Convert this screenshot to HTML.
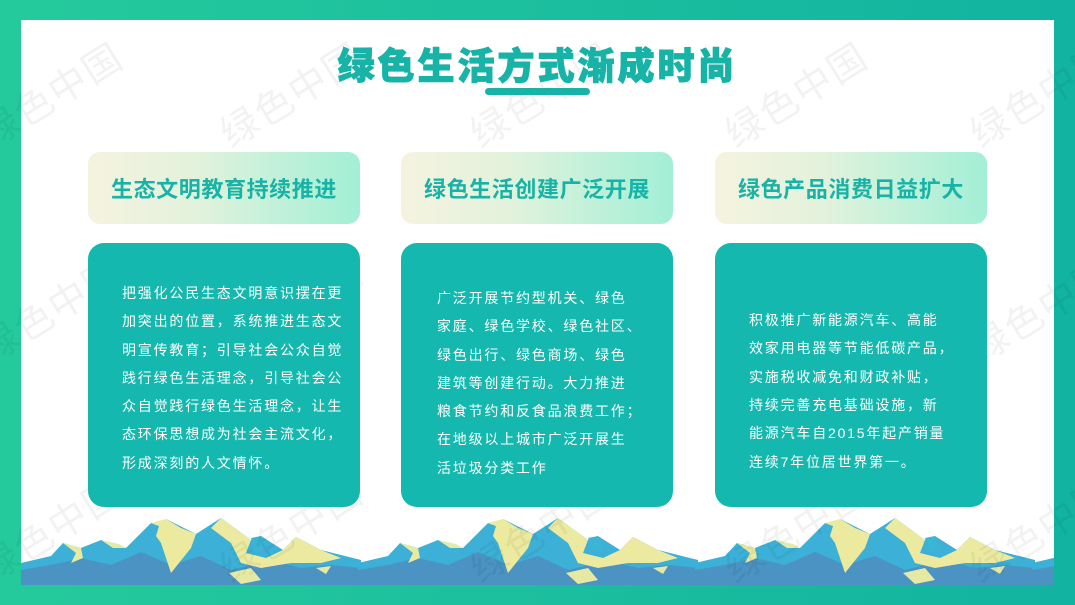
<!DOCTYPE html>
<html><head><meta charset="utf-8">
<style>
*{margin:0;padding:0;box-sizing:border-box}
body{width:1075px;height:605px;overflow:hidden;position:relative;font-family:"Liberation Sans","Noto Sans CJK SC",sans-serif;background:linear-gradient(90deg,#25ca9c,#12b3a0)}
.inner{position:absolute;left:21px;top:20px;width:1033px;height:565px;background:#fff;overflow:hidden}
.wm{position:absolute;font-size:38px;color:rgba(0,0,0,0.05);transform:rotate(-32deg);white-space:nowrap;letter-spacing:2px}
.title{position:absolute;left:0;top:36px;width:1075px;text-align:center;font-size:37px;font-weight:900;color:#17b3a6;letter-spacing:3px;-webkit-text-stroke:1px #17b3a6}
.bar{position:absolute;left:485px;top:88px;width:105px;height:7px;border-radius:4px;background:#17b3a6}
.hd{position:absolute;top:152px;width:272px;height:72px;border-radius:12px;background:linear-gradient(90deg,#f5f3e0,#e2f2dc 40%,#a2efd6);color:#17b3a6;font-size:22px;font-weight:bold;letter-spacing:0.6px;display:flex;align-items:center;justify-content:center}
.bd{position:absolute;top:243px;width:272px;height:264px;border-radius:16px;background:#15b8ae;color:#fff;font-size:14px;letter-spacing:1.8px;line-height:28.3px;display:flex;align-items:center}
.bd div{padding-left:34px;width:272px}
</style></head><body>
<div class="inner">
<svg width="1033" height="565" style="position:absolute;left:0;top:0">
<defs>
<g id="m">
<polygon points="0,45 30,38 42,25 60,30 80,22 105,30 130,5 138,8 145,1 175,16 200,0 230,22 240,18 262,32 275,19 300,32 340,42 340,67 0,67" fill="#3cb0d6"/>
<polygon points="0,52 30,47 60,40 90,47 120,34 150,47 180,38 210,52 250,42 280,50 310,47 340,50 340,67 0,67" fill="#4a93c2"/>
<polygon points="42,25 55,35 50,45 62,40 60,30" fill="#e9ea9f"/>
<polygon points="80,22 92,30 105,30 98,26" fill="#e1ecaa"/>
<polygon points="130,5 145,1 160,10 175,16 170,30 150,55 145,40 140,25 135,18 138,8" fill="#ecea9e"/>
<polygon points="200,0 230,22 225,35 245,40 262,32 275,19 300,32 320,40 300,45 270,45 240,50 220,45 210,25 190,10" fill="#ebeaa0"/>
<polygon points="230,20 240,18 245,30 235,35" fill="#3ab5d5"/>
<polygon points="208,55 230,50 240,62 220,66" fill="#e6e9a4"/>
<polygon points="295,50 310,48 305,56" fill="#e6e9a4"/>
</g>
</defs>
<use href="#m" x="0" y="498"/>
<use href="#m" x="337" y="498"/>
<use href="#m" x="674" y="498"/>
<use href="#m" x="1011" y="498"/>
</svg>
</div>
<div class="wm" style="left:-30px;top:65px">绿色中国</div>
<div class="wm" style="left:210px;top:65px">绿色中国</div>
<div class="wm" style="left:460px;top:65px">绿色中国</div>
<div class="wm" style="left:715px;top:65px">绿色中国</div>
<div class="wm" style="left:960px;top:65px">绿色中国</div>
<div class="wm" style="left:-30px;top:280px">绿色中国</div>
<div class="wm" style="left:210px;top:280px">绿色中国</div>
<div class="wm" style="left:460px;top:280px">绿色中国</div>
<div class="wm" style="left:715px;top:280px">绿色中国</div>
<div class="wm" style="left:960px;top:280px">绿色中国</div>
<div class="wm" style="left:-30px;top:500px">绿色中国</div>
<div class="wm" style="left:210px;top:500px">绿色中国</div>
<div class="wm" style="left:460px;top:500px">绿色中国</div>
<div class="wm" style="left:715px;top:500px">绿色中国</div>
<div class="wm" style="left:960px;top:500px">绿色中国</div>
<div class="title">绿色生活方式渐成时尚</div>
<div class="bar"></div>
<div class="hd" style="left:88px">生态文明教育持续推进</div>
<div class="hd" style="left:401px">绿色生活创建广泛开展</div>
<div class="hd" style="left:715px">绿色产品消费日益扩大</div>
<div class="bd" style="left:88px"><div style="margin-top:6px">把强化公民生态文明意识摆在更<br>加突出的位置，系统推进生态文<br>明宣传教育；引导社会公众自觉<br>践行绿色生活理念，引导社会公<br>众自觉践行绿色生活理念，让生<br>态环保思想成为社会主流文化，<br>形成深刻的人文情怀。</div></div>
<div class="bd" style="left:401px"><div style="padding-left:36px;margin-top:16px">广泛开展节约型机关、绿色<br>家庭、绿色学校、绿色社区、<br>绿色出行、绿色商场、绿色<br>建筑等创建行动。大力推进<br>粮食节约和反食品浪费工作；<br>在地级以上城市广泛开展生<br>活垃圾分类工作</div></div>
<div class="bd" style="left:715px"><div style="margin-top:32px">积极推广新能源汽车、高能<br>效家用电器等节能低碳产品，<br>实施税收减免和财政补贴，<br>持续完善充电基础设施，新<br>能源汽车自2015年起产销量<br>连续7年位居世界第一。</div></div>
</body></html>
